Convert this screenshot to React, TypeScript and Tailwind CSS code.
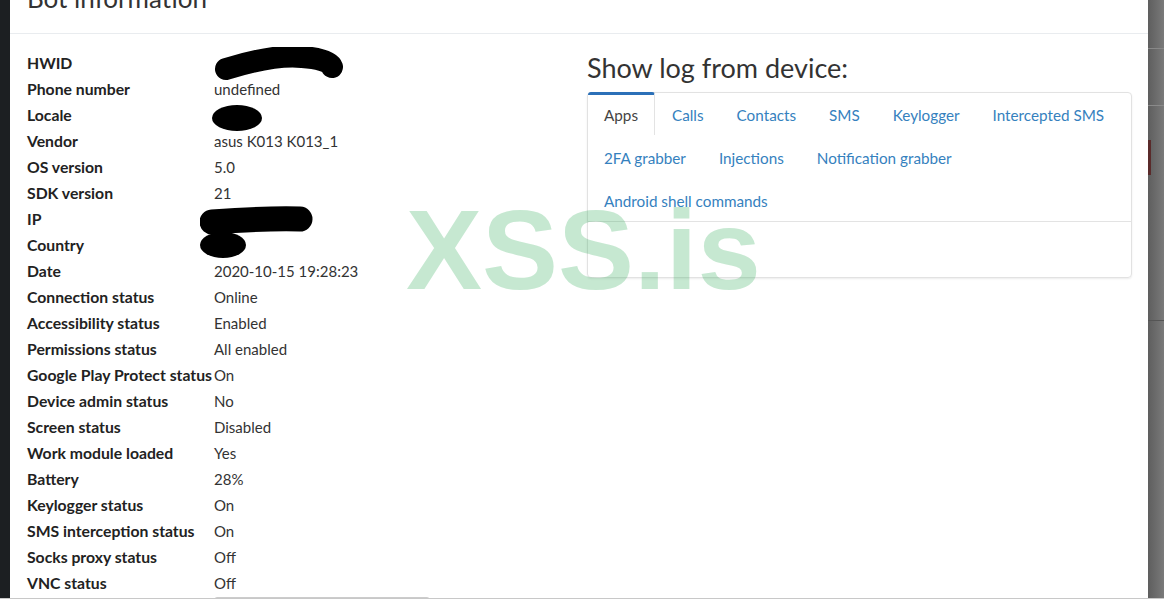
import React from "react";

const rows: [string, string][] = [
  ["HWID", ""],
  ["Phone number", "undefined"],
  ["Locale", ""],
  ["Vendor", "asus K013 K013_1"],
  ["OS version", "5.0"],
  ["SDK version", "21"],
  ["IP", ""],
  ["Country", ""],
  ["Date", "2020-10-15 19:28:23"],
  ["Connection status", "Online"],
  ["Accessibility status", "Enabled"],
  ["Permissions status", "All enabled"],
  ["Google Play Protect status", "On"],
  ["Device admin status", "No"],
  ["Screen status", "Disabled"],
  ["Work module loaded", "Yes"],
  ["Battery", "28%"],
  ["Keylogger status", "On"],
  ["SMS interception status", "On"],
  ["Socks proxy status", "Off"],
  ["VNC status", "Off"],
];

function Redact({ label }: { label: string }) {
  if (label === "HWID")
    return (
      <svg className="absolute left-[-2px] top-[-16px]" width="140" height="40" viewBox="0 0 140 40">
        <path d="M14 22 C 40 14, 70 8, 90 10 C 105 11, 118 14, 120 20" stroke="#000" strokeWidth="22" strokeLinecap="round" fill="none" />
      </svg>
    );
  if (label === "Locale")
    return (
      <svg className="absolute left-[-4px] top-[-11px]" width="60" height="30" viewBox="0 0 60 30">
        <ellipse cx="27" cy="14" rx="25" ry="13" fill="#000" />
      </svg>
    );
  if (label === "IP")
    return (
      <svg className="absolute left-[-14px] top-[-13px]" width="120" height="32" viewBox="0 0 120 32">
        <path d="M12 16 C 40 14, 70 12, 100 13" stroke="#000" strokeWidth="25" strokeLinecap="round" fill="none" />
      </svg>
    );
  if (label === "Country")
    return (
      <svg className="absolute left-[-15px] top-[-17px]" width="54" height="32" viewBox="0 0 54 32">
        <ellipse cx="24" cy="17" rx="23" ry="13" fill="#000" />
      </svg>
    );
  return null;
}

const tabs1 = ["Apps", "Calls", "Contacts", "SMS", "Keylogger", "Intercepted SMS"];
const tabs2 = ["2FA grabber", "Injections", "Notification grabber"];
const tabs3 = ["Android shell commands"];

function Tab({ t, active }: { t: string; active?: boolean }) {
  return (
    <div
      className={
        active
          ? "h-[43px] px-4 mr-[1px] flex items-center text-[#444] bg-white border-t-[3px] border-t-[#2b70b8] border-r border-r-[#e3e3e3] rounded-tl-[3px] rounded-tr-[3px]"
          : "h-[43px] px-4 mr-[1px] flex items-center text-[#3581be] border-t-[3px] border-t-transparent"
      }
    >
      {t}
    </div>
  );
}

export default function App() {
  return (
    <div
      className="w-[1164px] h-[602px] overflow-hidden flex flex-col bg-white"
      style={{ fontFamily: "Lato, 'Open Sans', sans-serif" }}
    >
      <div className="flex h-[598px] shrink-0">
        <div className="w-[10px] bg-[#1c1f22]" />
        <div className="w-[1138px] bg-white relative flex flex-col overflow-hidden">
          <div className="h-[34px] shrink-0 border-b border-[#e9ecef] overflow-hidden">
            <div className="mt-[-20px] pl-[17px] text-[26px] leading-[36px] text-[#333]">Bot information</div>
          </div>
          <div className="flex shrink-0">
            <div className="w-[577px] pl-[17px] pt-[16px]">
              {rows.map(([l, v]) => (
                <div key={l} className="flex h-[26px] items-center text-[15px] text-[#333]">
                  <div className="w-[187px] shrink-0 whitespace-nowrap font-bold text-[15.75px] text-[#222]">{l}</div>
                  <div className="relative whitespace-nowrap">
                    {v}
                    <Redact label={l} />
                  </div>
                </div>
              ))}
              <div className="ml-[187px] mt-[1px] w-[216px] h-[10px] border border-[#ccc] rounded-[3px]" />
            </div>
            <div className="w-[545px] pt-[17px]">
              <div className="text-[27px] leading-[34px] text-[#333] mb-[7px]">Show log from device:</div>
              <div className="border border-[#e2e2e2] rounded-[4px] shadow-[0_1px_2px_rgba(0,0,0,0.08)] h-[186px]">
                <div className="border-b border-[#e3e3e3] text-[15.25px] mt-[-1px]">
                  <div className="flex">
                    {tabs1.map((t, i) => (
                      <Tab key={t} t={t} active={i === 0} />
                    ))}
                  </div>
                  <div className="flex">
                    {tabs2.map((t) => (
                      <Tab key={t} t={t} />
                    ))}
                  </div>
                  <div className="flex">
                    {tabs3.map((t) => (
                      <Tab key={t} t={t} />
                    ))}
                  </div>
                </div>
              </div>
            </div>
          </div>
          <div
            className="absolute left-[396px] top-[193px] text-[114px] font-bold leading-none text-[rgba(45,170,85,0.27)] pointer-events-none"
            style={{ fontFamily: "'Liberation Sans', Arial, sans-serif" }}
          >
            XSS.is
          </div>
        </div>
        <div className="w-[16px] bg-gradient-to-r from-[#5e5e5e] to-[#7a7a7a] flex flex-col">
          <div className="h-[48px]" />
          <div className="h-[1px] bg-[#888]" />
          <div className="h-[56px]" />
          <div className="h-[1px] bg-[#8a8a8a]" />
          <div className="h-[34px]" />
          <div className="h-[35px] w-[3px] bg-[#5a2a2a]" />
          <div className="h-[145px]" />
          <div className="h-[1px] bg-[#555]" />
        </div>
      </div>
      <div className="h-[1px] shrink-0 bg-[#c8c8c8]" />
      <div className="h-[3px] shrink-0 bg-white" />
    </div>
  );
}
